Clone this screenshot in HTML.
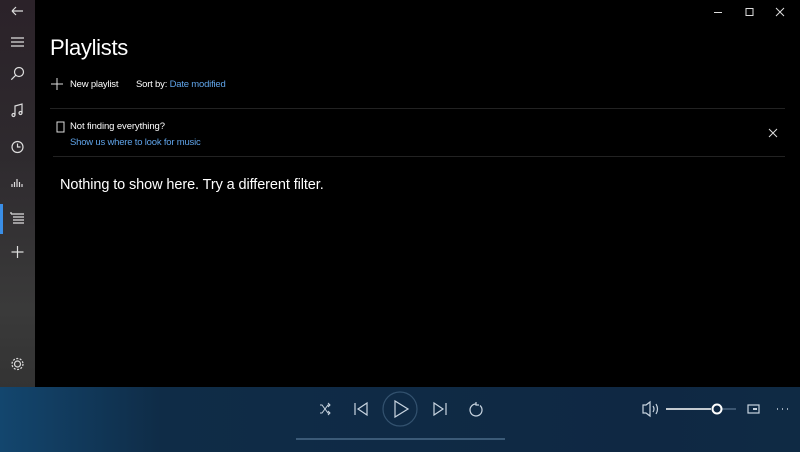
<!DOCTYPE html>
<html><head><style>
*{margin:0;padding:0;box-sizing:border-box}
body{width:800px;height:452px;background:#000;font-family:"Liberation Sans",sans-serif;color:#fff;position:relative;overflow:hidden}
.side{position:absolute;left:0;top:0;width:35px;height:387px;background:linear-gradient(#2b2229,#2e2a2e 40%,#3a3a3a 80%,#333)}
.bar{position:absolute;left:0;top:387px;width:800px;height:65px;background:linear-gradient(90deg,#13466e,#0f2c47 20%,#0f2843 80%,#0f2a44)}
.t{position:absolute;white-space:nowrap}
svg{position:absolute}
</style></head><body>
<div class="side"></div>
<div style="position:absolute;left:0;top:204px;width:3px;height:30px;background:#3a8ee6"></div>
<svg style="left:0;top:0" width="36" height="387" fill="none" stroke="#ddd" stroke-width="1.2">
<path d="M12 11h11M12 11l4-4M12 11l4 4"/>
<path d="M11 38h13M11 42h13M11 46h13"/>
<circle cx="19" cy="72" r="4.5"/><path d="M15.8 75.2l-4.5 4.5"/>
<path d="M15 115V106l7-2v9"/><circle cx="13.5" cy="115" r="1.5"/><circle cx="20.5" cy="113" r="1.5"/>
<circle cx="17.5" cy="147" r="5.5"/><path d="M17.5 143.5v3.5h3"/>
<path d="M12 187v-3M14.5 187v-5M17 187v-8M19.5 187v-5M22 187v-3"/>
<path d="M11 214h13M13 217h11M13 220h11M13 223h11M11 212v2"/>
<path d="M17.5 246v12M11.5 252h12"/>
<circle cx="17.5" cy="364" r="3"/><circle cx="17.5" cy="364" r="5.5" stroke-dasharray="2 1.5"/>
</svg>
<div class="t" style="left:50px;top:35px;font-size:22px;font-weight:300;letter-spacing:-0.3px">Playlists</div>
<svg style="left:51px;top:78px" width="12" height="12" stroke="#ddd"><path d="M6 0v12M0 6h12"/></svg>
<div class="t" style="left:70px;top:79px;font-size:9.5px;letter-spacing:-0.2px">New playlist</div>
<div class="t" style="left:136px;top:79px;font-size:9.5px;letter-spacing:-0.2px">Sort by: <span style="color:#5fa3e8">Date modified</span></div>
<div style="position:absolute;left:50px;top:108px;width:735px;height:1px;background:#222"></div>
<svg style="left:56px;top:121px" width="10" height="12" stroke="#ddd" fill="none"><rect x="1" y="1" width="7" height="10"/></svg>
<div class="t" style="left:70px;top:121px;font-size:9.5px;letter-spacing:-0.1px">Not finding everything?</div>
<div class="t" style="left:70px;top:137px;font-size:9.5px;letter-spacing:-0.2px;color:#5fa3e8">Show us where to look for music</div>
<svg style="left:768px;top:128px" width="10" height="10" stroke="#ddd"><path d="M1 1l8 8M9 1l-8 8"/></svg>
<div style="position:absolute;left:53px;top:156px;width:732px;height:1px;background:#222"></div>
<div class="t" style="left:60px;top:177px;font-size:14.5px;letter-spacing:-0.1px">Nothing to show here. Try a different filter.</div>
<svg style="left:700px;top:0" width="100" height="25" stroke="#ddd" fill="none"><path d="M14 12.5h8"/><rect x="46" y="8.5" width="7" height="7"/><path d="M76 8l8 8M84 8l-8 8"/></svg>
<div class="bar"></div>
<svg style="left:280px;top:387px" width="520" height="65" fill="none" stroke="#c8d4e0" stroke-width="1.2">
<path d="M40 18h2l6 8h2M40 26h2l6-8h2M48 16l2 2-2 2M48 24l2 2-2 2" stroke-width="1"/>
<path d="M75 16v12M87 16l-9 6 9 6z"/>
<circle cx="120" cy="22" r="17" stroke="#33526f"/><path d="M115 14v16l13-8z"/>
<path d="M154 16l9 6-9 6zM166 16v12"/>
<path d="M196 17a6 6 0 1 0 4 1.5M196 15v3h3"/>
<path d="M16 52h209" stroke="#3b5a77" stroke-width="2"/>
<path d="M363 18h3l4-3v14l-4-3h-3z M373 19q2 3 0 6M376 17q3 5 0 10"/>
<path d="M386 22h45" stroke="#fff" stroke-width="1.5"/><path d="M442 22h14" stroke="#5a7590"/>
<circle cx="437" cy="22" r="4.5" stroke="#fff" stroke-width="2" fill="#0f2843"/>
<rect x="468" y="18" width="11" height="8"/><path d="M473 22h4" stroke-width="2"/>
<path d="M497 22h1M502 22h1M507 22h1" stroke-width="1.5"/>
</svg>
</body></html>
